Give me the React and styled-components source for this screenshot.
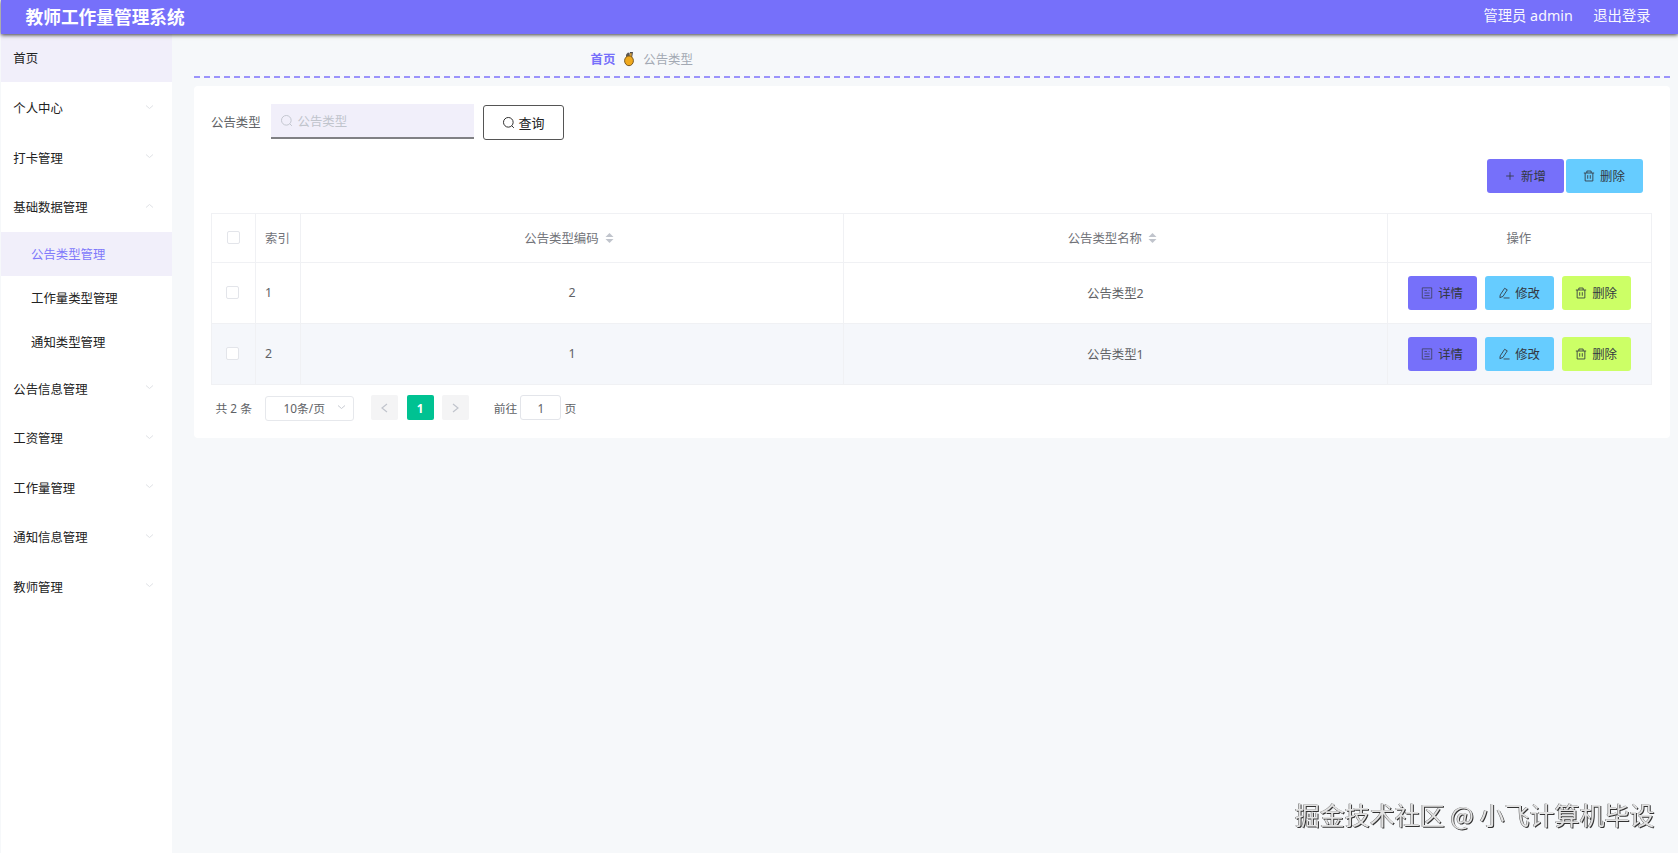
import React from "react";
import styled, { createGlobalStyle } from "styled-components";

const Global = createGlobalStyle`
  * { box-sizing: border-box; }
  body {
    margin: 0;
    background: #f6f8fa;
    font-family: "Noto Sans", "Noto Sans CJK SC", sans-serif;
    font-size: 12.4px;
    color: #606266;
    overflow: hidden;
  }
  button, input { font: inherit; color: inherit; }
`;

const Page = styled.div`
  height: 853px;
  display: flex;
  flex-direction: column;
  padding-left: 1px;
`;

const Header = styled.header`
  position: relative;
  z-index: 1;
  flex: none;
  height: 34px;
  padding: 0 27.5px 0 24.5px;
  display: flex;
  align-items: center;
  background: #7670fa;
  color: #fff;
  box-shadow: 0 1px 4px rgba(0, 0, 0, 0.75);
`;

const Title = styled.h1`
  margin: 0 auto 0 0;
  font-size: 17.7px;
  font-weight: 700;
  line-height: 34px;
`;

const HeaderLink = styled.span`
  font-size: 14.3px;
  line-height: 32px;
  margin-left: ${(p) => p.$gap || 0}px;
  opacity: 0.95;
  margin-bottom: 2px;
`;

const Body = styled.div`
  flex: 1;
  display: flex;
  min-height: 0;
`;

const Sidebar = styled.nav`
  flex: none;
  width: 171px;
  background: #fff;
`;

const MenuItem = styled.div`
  height: ${(p) => (p.$home ? 48.3 : 49.4)}px;
  margin-bottom: ${(p) => (p.$home ? 1.5 : 0)}px;
  padding: 0 18px 0 12.3px;
  display: flex;
  align-items: center;
  justify-content: space-between;
  background: ${(p) => (p.$home ? "#f1effa" : "#fff")};
  color: #222;
  svg { margin-top: -3px; }
`;

const SubItem = styled.div`
  height: 44.1px;
  padding: 0 0 1px 30px;
  display: flex;
  align-items: center;
  background: ${(p) => (p.$active ? "#f1effa" : "#fff")};
  color: ${(p) => (p.$active ? "#8079fb" : "#222")};
`;

const Main = styled.main`
  flex: 1;
  padding: 0 8px 0 21.5px;
`;

const Crumbs = styled.div`
  height: 43.5px;
  border-bottom: 2px dashed #9a93fb;
  padding: 9px 0 0 397px;
  display: flex;
  align-items: center;
  gap: 8px;
  color: #a3a9b3;
  b { color: #7670fa; font-weight: 600; }
`;

const Card = styled.section`
  margin-top: 8.5px;
  height: 352px;
  padding: 18px 18px 0 17.5px;
  background: #fff;
  border-radius: 4px;
`;

const SearchRow = styled.div`
  display: flex;
  align-items: center;
  height: 36px;
`;

const SearchField = styled.div`
  width: 203px;
  height: 35px;
  margin: 0 9px 1px 10px;
  padding-left: 9px;
  display: flex;
  align-items: center;
  gap: 5px;
  background: #f1effa;
  border-bottom: 2px solid #808084;
  color: #c0c4cc;
`;

const QueryButton = styled.button`
  width: 81px;
  height: 35px;
  padding: 0;
  display: flex;
  align-items: center;
  justify-content: center;
  gap: 4px;
  background: #fff;
  border: 1px solid #555;
  border-radius: 3px;
  color: #222;
  font-size: 13px;
`;

const Actions = styled.div`
  margin-top: 19px;
  padding-right: 9px;
  display: flex;
  justify-content: flex-end;
  gap: 1.5px;
`;

const Button = styled.button`
  width: ${(p) => p.$w}px;
  height: 34.3px;
  padding: 0 1px 0 0;
  border: 0;
  border-radius: 3px;
  display: flex;
  align-items: center;
  justify-content: center;
  gap: 5.5px;
  background: ${(p) => p.$bg};
  color: #333842;
`;

const Table = styled.div`
  margin-top: 19.7px;
  border: 1px solid #f0f1f4;
  border-bottom: 0;
`;

const Row = styled.div`
  display: grid;
  grid-template-columns: 43.5px 45.3px 543.3px 543.5px 1fr;
  height: ${(p) => (p.$head ? 48.6 : 61.2)}px;
  background: ${(p) => (p.$striped ? "#f5f7fb" : "#fff")};
  color: ${(p) => (p.$head ? "#707278" : "#606266")};
`;

const Cell = styled.div`
  display: flex;
  align-items: center;
  justify-content: ${(p) => (p.$left ? "flex-start" : "center")};
  padding-left: ${(p) => p.$pad || 0}px;
  padding-right: ${(p) => p.$padRight || 0}px;
  gap: ${(p) => p.$gap || 0}px;
  border-right: 1px solid #f0f1f4;
  border-bottom: 1px solid #f0f1f4;
  &:last-child { border-right: 0; }
`;

const Check = styled.span`
  width: 13px;
  height: 13px;
  border: 1px solid #e3e5ea;
  border-radius: 2px;
  background: #fff;
`;

const Pager = styled.div`
  margin-top: 10.5px;
  padding-left: 4.5px;
  display: flex;
  align-items: center;
  height: 25px;
  font-size: 11.8px;
`;

const Select = styled.div`
  width: 88.5px;
  height: 25px;
  margin: 1px 17px 0 13.5px;
  padding: 0 7px 2px 17px;
  display: flex;
  align-items: center;
  justify-content: space-between;
  border: 1px solid #e6e8ec;
  border-radius: 3px;
`;

const PageButton = styled.button`
  width: 27px;
  height: 25px;
  padding: 0;
  margin-right: 8.6px;
  display: flex;
  align-items: center;
  justify-content: center;
  border: 0;
  border-radius: 2px;
  background: ${(p) => (p.$active ? "#00c292" : "#f4f4f5")};
  color: ${(p) => (p.$active ? "#fff" : "#c0c4cc")};
  font-weight: 700;
`;

const Jump = styled.label`
  margin-left: 16px;
  display: flex;
  align-items: center;
  gap: 3px;
`;

const JumpInput = styled.input`
  width: 41px;
  height: 25px;
  padding: 0;
  text-align: center;
  border: 1px solid #e3e5ea;
  border-radius: 3px;
  background: #fff;
`;

const Watermark = styled.div`
  position: fixed;
  right: 23.5px;
  bottom: 21.5px;
  font-family: "Noto Sans CJK SC", sans-serif;
  font-size: 25px;
  line-height: 36px;
  white-space: nowrap;
  color: #e2e2e2;
  text-shadow: 1px 1px 0.5px #333, -0.5px -0.5px 0.5px #555;
`;

const Svg = ({ size = 13, sw = 1, children }) => (
  <svg width={size} height={size} viewBox="0 0 14 14" fill="none" stroke="currentColor" strokeWidth={sw}>
    {children}
  </svg>
);
const Chevron = ({ up, color = "#e0e2e6" }) => (
  <svg width="9" height="6" viewBox="0 0 9 6" fill="none" stroke={color} strokeWidth="1">
    <path d={up ? "M1 4.5 4.5 1.5 8 4.5" : "M1 1.5 4.5 4.5 8 1.5"} />
  </svg>
);
const SearchIcon = ({ size }) => (
  <Svg size={size}>
    <circle cx="6.8" cy="6.8" r="5.2" />
    <path d="M10.5 10.5 12.8 12.8" />
  </Svg>
);
const PlusIcon = () => <Svg size={12}><path d="M7 2.5V11.5M2.5 7H11.5" /></Svg>;
const TrashIcon = () => (
  <Svg size={12}>
    <path d="M1 3.5H13M4.5 3.5V1.2H9.5V3.5M2.5 3.5V12.8H11.5V3.5M5.5 6V10.2M8.5 6V10.2" />
  </Svg>
);
const DocIcon = () => (
  <Svg size={12} sw={0.8}>
    <path d="M1.5 1H12.5V13H1.5ZM4 4H7M4 7H10M4 10H10M9 4H10" />
  </Svg>
);
const EditIcon = () => (
  <Svg size={12}>
    <path d="M7.7 1.5 10.8 3.3 5.8 11 2.2 12.4 2.6 9.2ZM6.5 12.8H13.5" />
  </Svg>
);
const Sorter = () => (
  <svg width="9" height="12" viewBox="0 0 9 12" fill="#c0c4cc">
    <path d="M0.5 5 4.5 1 8.5 5ZM0.5 7 4.5 11 8.5 7Z" />
  </svg>
);
const Medal = () => (
  <svg width="12" height="16" viewBox="0 0 12 16">
    <path d="M3 3.5 5 1.5 6.5 2V6H3Z" fill="#5a5856" />
    <path d="M7 1H10L9 7H6Z" fill="#4b4a4c" />
    <path d="M7 2.2H8.8L8.4 6H6.8Z" fill="#d9a13a" />
    <ellipse cx="6" cy="9.8" rx="4.4" ry="4.9" fill="#f0a91d" stroke="#7b5a22" strokeWidth="1" />
  </svg>
);
const Arrow = ({ next }) => (
  <svg width="7" height="10" viewBox="0 0 7 10" fill="none" stroke="currentColor" strokeWidth="1.2">
    <path d={next ? "M1 1 6 5 1 9" : "M6 1 1 5 6 9"} />
  </svg>
);

const before = ["个人中心", "打卡管理", "基础数据管理"];
const subs = ["公告类型管理", "工作量类型管理", "通知类型管理"];
const after = ["公告信息管理", "工资管理", "工作量管理", "通知信息管理", "教师管理"];
const rows = [
  { id: 1, code: 2, name: "公告类型2" },
  { id: 2, code: 1, name: "公告类型1" },
];

export default function App() {
  return (
    <Page>
      <Global />
      <Header>
        <Title>教师工作量管理系统</Title>
        <HeaderLink>管理员 admin</HeaderLink>
        <HeaderLink $gap={20.5}>退出登录</HeaderLink>
      </Header>
      <Body>
        <Sidebar>
          <MenuItem $home>首页</MenuItem>
          {before.map((t, i) => (
            <MenuItem key={t}>{t}<Chevron up={i === 2} /></MenuItem>
          ))}
          {subs.map((t, i) => <SubItem key={t} $active={i === 0}>{t}</SubItem>)}
          {after.map((t) => <MenuItem key={t}>{t}<Chevron /></MenuItem>)}
        </Sidebar>
        <Main>
          <Crumbs><b>首页</b><Medal /><span>公告类型</span></Crumbs>
          <Card>
            <SearchRow>
              <span>公告类型</span>
              <SearchField><SearchIcon size={13} />公告类型</SearchField>
              <QueryButton><SearchIcon size={13} />查询</QueryButton>
            </SearchRow>
            <Actions>
              <Button $w={77.5} $bg="#7670fa"><PlusIcon />新增</Button>
              <Button $w={77.5} $bg="#66ccff"><TrashIcon />删除</Button>
            </Actions>
            <Table>
              <Row $head>
                <Cell $pad={1}><Check /></Cell>
                <Cell $left $pad={9.5}>索引</Cell>
                <Cell $gap={6} $padRight={6}>公告类型编码<Sorter /></Cell>
                <Cell $gap={6} $padRight={6}>公告类型名称<Sorter /></Cell>
                <Cell $padRight={1}>操作</Cell>
              </Row>
              {rows.map((r, i) => (
                <Row key={r.id} $striped={i === 1}>
                  <Cell $padRight={2}><Check /></Cell>
                  <Cell $left $pad={9.5}>{r.id}</Cell>
                  <Cell>{r.code}</Cell>
                  <Cell>{r.name}</Cell>
                  <Cell $gap={8}>
                    <Button $w={69} $bg="#7670fa"><DocIcon />详情</Button>
                    <Button $w={69} $bg="#66ccff"><EditIcon />修改</Button>
                    <Button $w={69} $bg="#ccff66"><TrashIcon />删除</Button>
                  </Cell>
                </Row>
              ))}
            </Table>
            <Pager>
              <span>共 2 条</span>
              <Select>10条/页<Chevron color="#c8cbd2" /></Select>
              <PageButton><Arrow /></PageButton>
              <PageButton $active>1</PageButton>
              <PageButton><Arrow next /></PageButton>
              <Jump>前往<JumpInput defaultValue="1" />页</Jump>
            </Pager>
          </Card>
        </Main>
      </Body>
      <Watermark>掘金技术社区 @ 小飞计算机毕设</Watermark>
    </Page>
  );
}
